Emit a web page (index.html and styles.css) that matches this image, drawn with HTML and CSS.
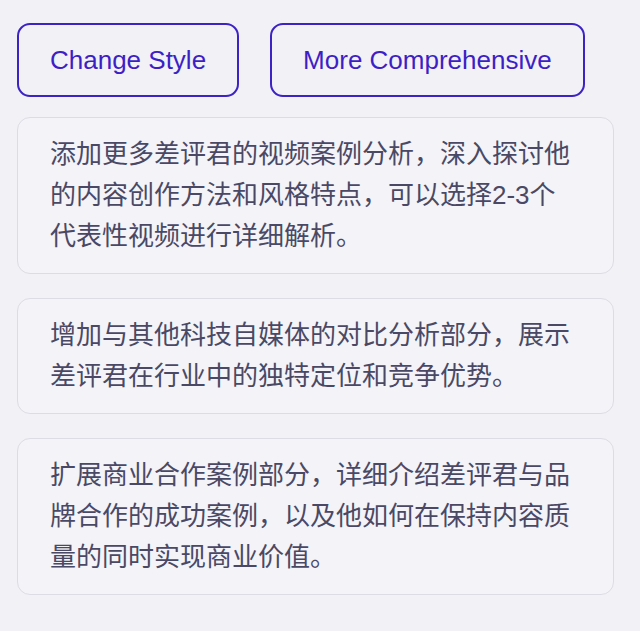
FILE: index.html
```html
<!DOCTYPE html>
<html lang="zh">
<head>
<meta charset="utf-8">
<link rel="stylesheet" href="styles.css">
</head>
<body>
<div class="page">
  <div class="actions">
    <button class="btn">Change Style</button>
    <button class="btn">More Comprehensive</button>
  </div>
  <div class="card">添加更多差评君的视频案例分析，深入探讨他的内容创作方法和风格特点，可以选择2-3个代表性视频进行详细解析。</div>
  <div class="card">增加与其他科技自媒体的对比分析部分，展示差评君在行业中的独特定位和竞争优势。</div>
  <div class="card">扩展商业合作案例部分，详细介绍差评君与品牌合作的成功案例，以及他如何在保持内容质量的同时实现商业价值。</div>
</div>
</body>
</html>
```

FILE: styles.css
```css
html, body {
  margin: 0;
  padding: 0;
  background: #f2f1f6;
}
.page {
  width: 597px;
  padding: 23px 0 0 17px;
  display: flex;
  flex-direction: column;
  gap: 24px;
}
.actions {
  display: flex;
  gap: 31px;
  margin-bottom: -4px;
}
.btn {
  height: 74px;
  padding: 0 31px;
  border: 2px solid #3d22c4;
  border-radius: 13px;
  background: transparent;
  color: #3d1fc6;
  font-family: "Liberation Sans", Arial, sans-serif;
  font-size: 26px;
}
.card {
  box-sizing: border-box;
  border: 1px solid #dddce4;
  border-radius: 13px;
  background: #f4f3f8;
  padding: 16px 40px 16px 32px;
  font-family: "Liberation Sans", "Noto Sans CJK SC", sans-serif;
  font-size: 26px;
  line-height: 41px;
  color: #4a4965;
}
```
